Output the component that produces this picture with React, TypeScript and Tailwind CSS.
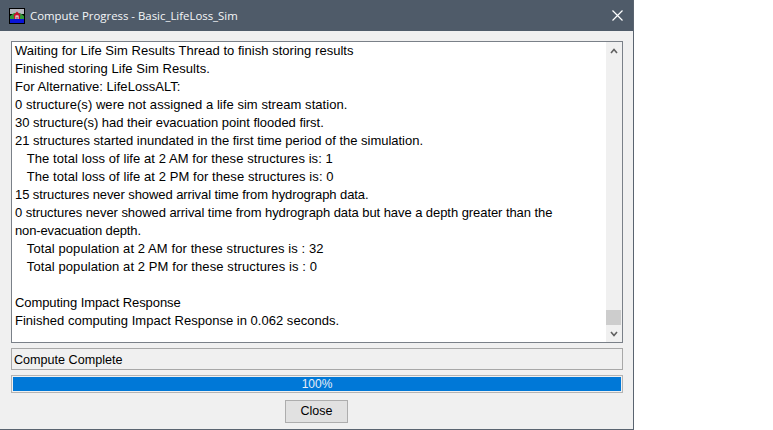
import React from 'react';

const lines = [
  { text: 'Waiting for Life Sim Results Thread to finish storing results', cls: 'tracking-[0.03px]' },
  { text: 'Finished storing Life Sim Results.', cls: 'tracking-[0.06px]' },
  { text: 'For Alternative: LifeLossALT:', cls: 'tracking-[0.03px]' },
  { text: '0 structure(s) were not assigned a life sim stream station.', cls: 'tracking-[0.05px]' },
  { text: '30 structure(s) had their evacuation point flooded first.', cls: 'tracking-[-0.035px]' },
  { text: '21 structures started inundated in the first time period of the simulation.', cls: 'tracking-[-0.013px]' },
  { text: '   The total loss of life at 2 AM for these structures is: 1', cls: 'ml-px tracking-[0.07px]' },
  { text: '   The total loss of life at 2 PM for these structures is: 0', cls: 'ml-px tracking-[0.07px]' },
  { text: '15 structures never showed arrival time from hydrograph data.', cls: 'tracking-[-0.08px]' },
  { text: '0 structures never showed arrival time from hydrograph data but have a depth greater than the', cls: 'tracking-[-0.065px]' },
  { text: 'non-evacuation depth.', cls: 'tracking-[-0.13px]' },
  { text: '   Total population at 2 AM for these structures is : 32', cls: 'ml-px tracking-[0.09px]' },
  { text: '   Total population at 2 PM for these structures is : 0', cls: 'ml-px tracking-[0.09px]' },
  { text: '\u00a0', cls: '' },
  { text: 'Computing Impact Response', cls: 'tracking-[-0.08px]' },
  { text: 'Finished computing Impact Response in 0.062 seconds.', cls: 'tracking-[0.02px]' },
];

const AppIcon = () => (
  <svg width="16" height="16" viewBox="0 0 16 16" className="shrink-0">
    <rect x="0" y="0" width="16" height="16" fill="#000" />
    <rect x="1" y="1" width="14" height="5" fill="#b8b8c0" />
    <rect x="1" y="11" width="14" height="4" fill="#0a14d8" />
    <path d="M1 8 L5 5 L11 5 L15 8 L15 11 L1 11 Z" fill="#2f9a3a" />
    <path d="M8 3.5 L12 7.5 L11 7.5 L11 11 L5 11 L5 7.5 L4 7.5 Z" fill="#c8102e" />
    <rect x="6.5" y="7.5" width="3" height="3.5" fill="#fff" />
    <rect x="7.5" y="8.5" width="1" height="2.5" fill="#5a1010" />
  </svg>
);

export default function App() {
  return (
    <div className="w-[773px] h-[430px] bg-white font-['Liberation_Sans',sans-serif]">
      <div className="w-[634px] h-[430px] flex flex-col bg-[#f0f0f0] border-r border-b border-[#5a6470]">
        <div className="h-[31px] shrink-0 bg-[#4f5b69] flex items-center pl-[9px] pr-[10px] gap-[5px]">
          <AppIcon />
          <span className="text-[11.4px] text-[#f4f6f8] font-['Open_Sans',sans-serif]">Compute Progress - Basic_LifeLoss_Sim</span>
          <svg width="11" height="11" viewBox="0 0 11 11" className="ml-auto">
            <path d="M0.5 0.5 L10.5 10.5 M10.5 0.5 L0.5 10.5" stroke="#fff" strokeWidth="1.2" />
          </svg>
        </div>
        <div className="flex-1 flex flex-col pl-[11px] pr-[10px] pt-[10px]">
          <div className="h-[302px] shrink-0 flex border border-[#7a8088] bg-white">
            <div className="flex-1 pl-[3px] text-[13px] leading-[18px] text-black whitespace-pre">
              {lines.map((l, i) => (
                <div key={i} className={l.cls}>{l.text}</div>
              ))}
            </div>
            <div className="w-[16px] shrink-0 flex flex-col bg-[#f0f0f0]">
              <div className="h-[17px] flex items-center justify-center">
                <svg width="8" height="6" viewBox="0 0 8 6"><path d="M1 5 L4 1.5 L7 5" fill="none" stroke="#606060" strokeWidth="1.6" /></svg>
              </div>
              <div className="flex-1 flex flex-col justify-end">
                <div className="h-[15px] w-[15px] bg-[#cdcdcd]" />
              </div>
              <div className="h-[17px] flex items-center justify-center">
                <svg width="8" height="6" viewBox="0 0 8 6"><path d="M1 1 L4 4.5 L7 1" fill="none" stroke="#606060" strokeWidth="1.6" /></svg>
              </div>
            </div>
          </div>
          <div className="mt-[5px] h-[22px] shrink-0 border border-[#a8a8a8] flex items-center pl-[2px] pt-[2px] text-[12.6px] text-black">
            Compute Complete
          </div>
          <div className="mt-[5px] h-[18px] shrink-0 border border-[#b4b4b4] p-px">
            <div className="h-full bg-[#0078d7] flex items-center justify-center text-[12px] text-[#e6eef8]">100%</div>
          </div>
          <div className="mt-[7px] flex justify-center pr-px">
            <button className="w-[63px] h-[23px] bg-[#e1e1e1] border border-[#adadad] text-[12.5px] text-black">Close</button>
          </div>
        </div>
      </div>
    </div>
  );
}
